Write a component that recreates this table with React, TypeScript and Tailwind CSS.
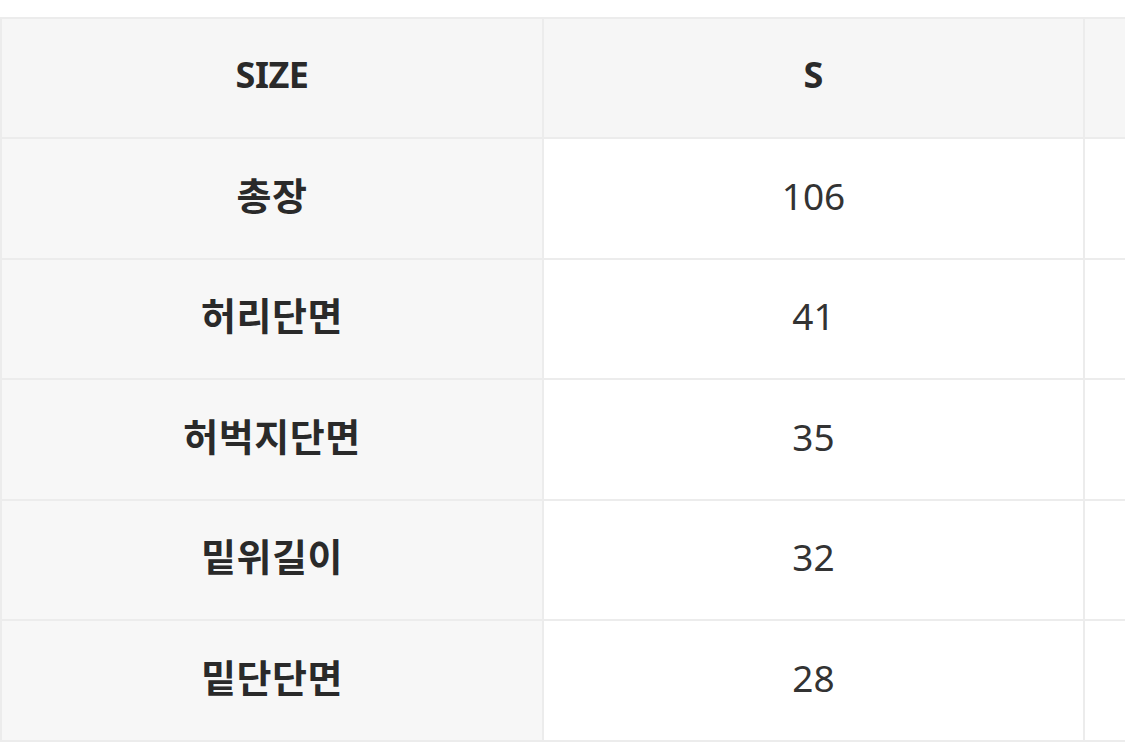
const rows = [
  { label: '총장', values: ['106', ''] },
  { label: '허리단면', values: ['41', ''] },
  { label: '허벅지단면', values: ['35', ''] },
  { label: '밑위길이', values: ['32', ''] },
  { label: '밑단단면', values: ['28', ''] },
]

export default function App() {
  return (
    <div
      className="w-[1125px] h-[747px] overflow-hidden bg-white pt-[17px]"
      style={{ fontFamily: '"Noto Sans", "Noto Sans CJK KR", sans-serif' }}
    >
      <div className="grid w-[1627px] grid-cols-[542px_541px_544px] border-t-2 border-l-2 border-[#ececec]">
        {/* header */}
        <div className="h-[120px] flex items-center justify-center pb-[6px] bg-[#f6f6f6] border-r-2 border-b-2 border-[#ececec] text-[36px] font-bold text-[#2a2a2a] tracking-[-0.5px]">
          SIZE
        </div>
        <div className="h-[120px] flex items-center justify-center pb-[6px] bg-[#f6f6f6] border-r-2 border-b-2 border-[#ececec] text-[36px] font-bold text-[#2a2a2a]">
          S
        </div>
        <div className="h-[120px] bg-[#f6f6f6] border-r-2 border-b-2 border-[#ececec]" />

        {rows.map((row) => (
          <>
            <div
              key={row.label}
              className="h-[120.5px] flex items-center justify-center pb-[6px] bg-[#f7f7f7] border-r-2 border-b-2 border-[#ececec] text-[38px] font-bold text-[#2a2a2a] tracking-[0.5px]"
            >
              {row.label}
            </div>
            <div className="h-[120.5px] flex items-center justify-center pb-[6px] bg-white border-r-2 border-b-2 border-[#ececec] text-[37px] text-[#333]">
              {row.values[0]}
            </div>
            <div className="h-[120.5px] bg-white border-r-2 border-b-2 border-[#ececec]" />
          </>
        ))}
      </div>
    </div>
  )
}
